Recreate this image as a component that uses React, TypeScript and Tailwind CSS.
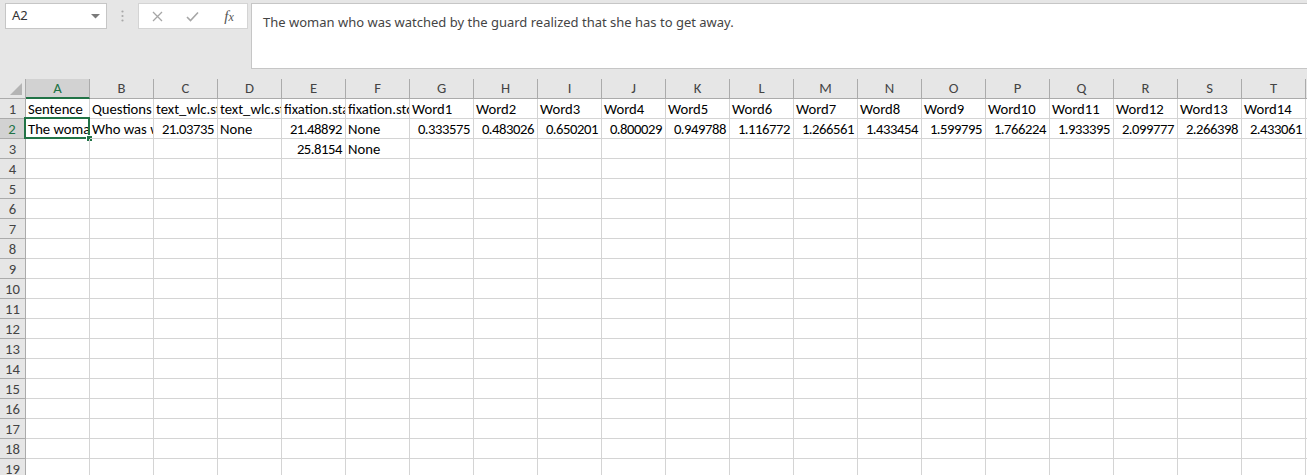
import React from 'react';

const COLS = 'ABCDEFGHIJKLMNOPQRST'.split('');
type Cell = { t: string; r?: boolean };

const words = Array.from({ length: 14 }, (_, i) => `Word${i + 1}`);
const nums = [
  '0.333575', '0.483026', '0.650201', '0.800029', '0.949788', '1.116772', '1.266561',
  '1.433454', '1.599795', '1.766224', '1.933395', '2.099777', '2.266398', '2.433061',
];

const DATA: Record<number, Record<string, Cell>> = {
  1: {
    A: { t: 'Sentence' },
    B: { t: 'Questions' },
    C: { t: 'text_wlc.start' },
    D: { t: 'text_wlc.stop' },
    E: { t: 'fixation.start' },
    F: { t: 'fixation.stop' },
  },
  2: {
    A: { t: 'The woman who was watched by the guard realized that she has to get away.' },
    B: { t: 'Who was watching the woman?' },
    C: { t: '21.03735', r: true },
    D: { t: 'None' },
    E: { t: '21.48892', r: true },
    F: { t: 'None' },
  },
  3: {
    E: { t: '25.8154', r: true },
    F: { t: 'None' },
  },
};
COLS.slice(6).forEach((c, i) => {
  DATA[1][c] = { t: words[i] };
  DATA[2][c] = { t: nums[i], r: true };
});

const ROWS = Array.from({ length: 19 }, (_, i) => i + 1);

function TopBar() {
  return (
    <div className="h-[79px] bg-[#e6e6e6] flex items-start pt-[3px] pl-[5px] font-['Segoe_UI','Noto_Sans',sans-serif]">
      <div className="w-[102px] h-[26px] bg-white border border-[#c6c6c6] flex items-center justify-between pl-[6px] pr-[6px]">
        <span className="text-[13px] text-[#333]">A2</span>
        <svg width="9" height="5" viewBox="0 0 9 5"><path d="M0 0 L9 0 L4.5 4.5 Z" fill="#7a7a7a" /></svg>
      </div>
      <div className="w-[31px] h-[26px] flex items-center justify-center">
        <svg width="3" height="12" viewBox="0 0 3 12">
          <circle cx="1.5" cy="1.5" r="1.1" fill="#a8a8a8" />
          <circle cx="1.5" cy="6" r="1.1" fill="#a8a8a8" />
          <circle cx="1.5" cy="10.5" r="1.1" fill="#a8a8a8" />
        </svg>
      </div>
      <div className="w-[110px] h-[26px] bg-white border border-[#d4d4d4] flex items-center">
        <div className="w-[36px] flex justify-center pl-[1px]">
          <svg width="11" height="11" viewBox="0 0 11 11">
            <path d="M1 1 L10 10 M10 1 L1 10" stroke="#a6a6a6" strokeWidth="1.3" fill="none" />
          </svg>
        </div>
        <div className="w-[34px] flex justify-center">
          <svg width="13" height="11" viewBox="0 0 13 11">
            <path d="M1 6 L4.5 9.5 L12 1.5" stroke="#a6a6a6" strokeWidth="1.6" fill="none" />
          </svg>
        </div>
        <div className="flex-1 flex justify-center pl-[2px]">
          <span className="font-['Liberation_Serif',serif] italic text-[#555] text-[15px] leading-none">
            f<span className="text-[12px]">x</span>
          </span>
        </div>
      </div>
      <div className="ml-[3px] flex-1 h-[66px] bg-white border border-r-0 border-[#c6c6c6] pl-[11px] pt-[5px]">
        <span className="text-[13px] text-[#444]">
          The woman who was watched by the guard realized that she has to get away.
        </span>
      </div>
    </div>
  );
}

function HeaderRow() {
  return (
    <div className="flex h-[20px]">
      <div className="w-[26px] shrink-0 bg-[#e6e6e6] border-r border-b border-[#ababab] relative">
        <svg className="absolute right-[3px] bottom-[3px]" width="12" height="12" viewBox="0 0 12 12">
          <path d="M12 0 L12 12 L0 12 Z" fill="#b4b4b4" />
        </svg>
      </div>
      {COLS.map((c) =>
        c === 'A' ? (
          <div
            key={c}
            className="w-[64px] shrink-0 bg-[#d2d2d2] border-r border-[#ababab] border-b-2 border-b-[#217346] flex items-center justify-center text-[14.67px] text-[#217346] leading-none"
          >
            {c}
          </div>
        ) : (
          <div
            key={c}
            className="w-[64px] shrink-0 bg-[#e6e6e6] border-r border-b border-[#ababab] flex items-center justify-center text-[14.67px] text-[#444] leading-none"
          >
            {c}
          </div>
        )
      )}
      <div className="flex-1 bg-[#e6e6e6] border-b border-[#ababab]" />
    </div>
  );
}

function Row({ n }: { n: number }) {
  const sel = n === 2;
  const rowData = DATA[n] || {};
  return (
    <div className="flex h-[20px]">
      <div
        className={
          sel
            ? 'w-[26px] shrink-0 bg-[#d2d2d2] border-r-2 border-r-[#217346] border-b border-b-[#ababab] flex items-center justify-center pt-[1px] text-[14.67px] text-[#217346] leading-none'
            : 'w-[26px] shrink-0 bg-[#e6e6e6] border-r border-b border-[#ababab] flex items-center justify-center pt-[1px] text-[14.67px] text-[#444] leading-none'
        }
      >
        {n}
      </div>
      {COLS.map((c) => {
        const cell = rowData[c];
        const isSel = sel && c === 'A';
        return (
          <div
            key={c}
            className="w-[64px] shrink-0 border-r border-b border-[#d4d4d4] relative"
          >
            <div
              className={
                'w-full overflow-hidden whitespace-nowrap pl-[2px] pr-[3px] pt-[1px] leading-[18px] text-[14.67px] text-black ' +
                (cell?.r ? 'text-right tracking-[-0.45px]' : 'text-left')
              }
            >
              {cell?.t ?? ''}
            </div>
            {isSel && (
              <>
                <div className="absolute left-[-2px] top-[-2px] w-[66px] h-[22px] border-2 border-[#217346] pointer-events-none" />
                <div className="absolute right-[-4px] bottom-[-4px] w-[7px] h-[7px] bg-[#217346] border border-white" />
              </>
            )}
          </div>
        );
      })}
      <div className="flex-1 border-b border-[#d4d4d4]" />
    </div>
  );
}

export default function App() {
  return (
    <div className="w-[1307px] h-[475px] overflow-hidden bg-white font-[Carlito,Calibri,'Liberation_Sans',sans-serif]">
      <TopBar />
      <HeaderRow />
      {ROWS.map((n) => (
        <Row key={n} n={n} />
      ))}
    </div>
  );
}
